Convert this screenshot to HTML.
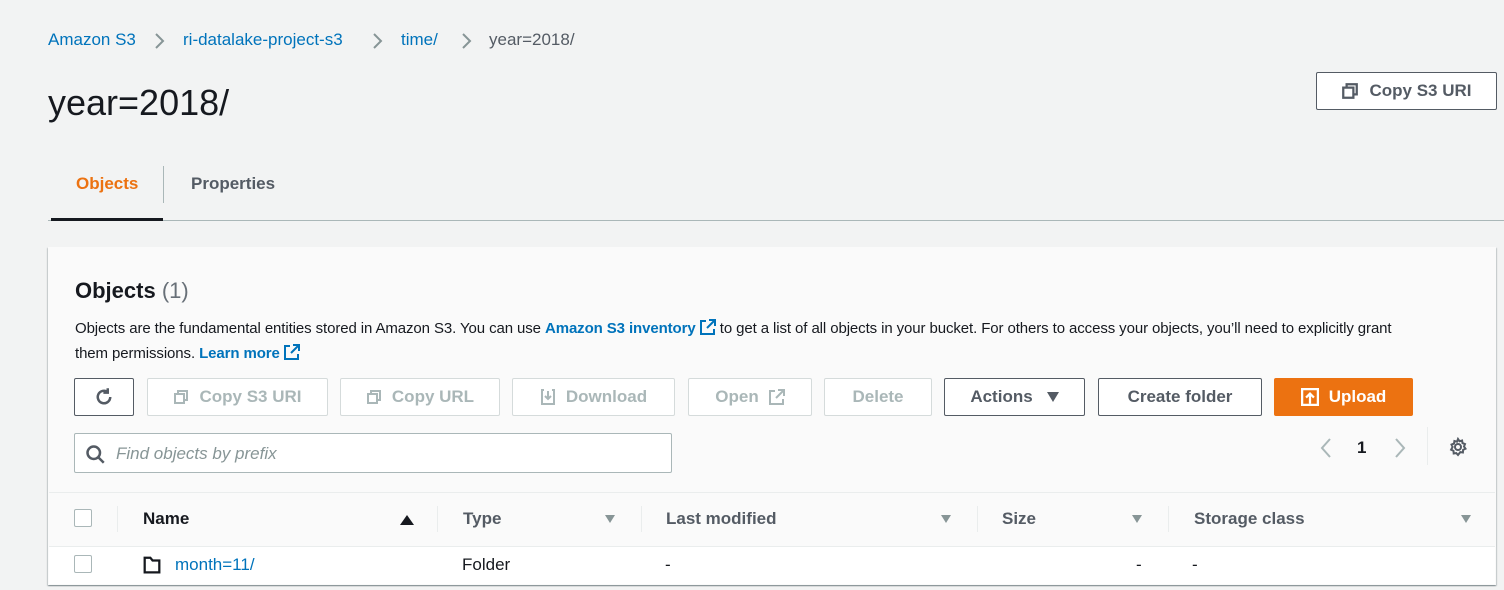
<!DOCTYPE html>
<html><head><meta charset="utf-8"><style>
*{box-sizing:border-box;margin:0;padding:0}
body{width:1504px;height:590px;background:#f2f3f3;font-family:"Liberation Sans",sans-serif;color:#16191f;position:relative;overflow:hidden}
.a{position:absolute;white-space:nowrap}
.bc{top:30px;font-size:17px;color:#0073bb}
.btn{position:absolute;height:38px;top:378px;border:1px solid #d5dbdb;border-radius:2px;background:#fff;color:#aab7b8;font-weight:bold;font-size:17px;display:flex;align-items:center;justify-content:center;gap:10px}
.dk{border-color:#545b64;color:#545b64}
.cb{position:absolute;width:18px;height:18px;border:1px solid #aab7b8;border-radius:2px;background:#fff}
.th{position:absolute;top:509px;font-size:17px;font-weight:bold;color:#545b64}
.sep{position:absolute;top:506px;width:1px;height:26px;background:#eaeded}
.tri{position:absolute;top:515px;width:0;height:0;border-left:5px solid transparent;border-right:5px solid transparent;border-top:8px solid #879596}
</style></head><body>
<div class="a bc" style="left:48px">Amazon S3</div>
<svg class="a" style="left:153px;top:32px" width="14" height="18" viewBox="0 0 14 18" fill="none" stroke="#879596" stroke-width="2"><path d="M3 2l7 7-7 7"/></svg>
<div class="a bc" style="left:183px">ri-datalake-project-s3</div>
<svg class="a" style="left:371px;top:32px" width="14" height="18" viewBox="0 0 14 18" fill="none" stroke="#879596" stroke-width="2"><path d="M3 2l7 7-7 7"/></svg>
<div class="a bc" style="left:401px">time/</div>
<svg class="a" style="left:460px;top:32px" width="14" height="18" viewBox="0 0 14 18" fill="none" stroke="#879596" stroke-width="2"><path d="M3 2l7 7-7 7"/></svg>
<div class="a" style="left:489px;top:30px;font-size:17px;color:#545b64">year=2018/</div>
<div class="a" style="left:48px;top:82px;font-size:36px">year=2018/</div>
<div class="btn dk" style="left:1316px;top:72px;width:181px;color:#545b64">
<svg width="18" height="18" viewBox="0 0 16 16" fill="none" stroke="#545b64" stroke-width="2"><rect x="2" y="5" width="9" height="9"/><path d="M5 5V2h9v9h-3"/></svg>Copy S3 URI</div>
<div class="a" style="left:76px;top:174px;font-size:17px;font-weight:bold;color:#ec7211">Objects</div>
<div class="a" style="left:163px;top:166px;width:1px;height:37px;background:#aab7b8"></div>
<div class="a" style="left:191px;top:174px;font-size:17px;font-weight:bold;color:#545b64">Properties</div>
<div class="a" style="left:48px;top:220px;width:1456px;height:1px;background:#aab7b8"></div>
<div class="a" style="left:51px;top:218px;width:112px;height:3px;background:#16191f"></div>

<div class="a" style="left:48px;top:247px;width:1448px;height:338px;background:#fafafa;box-shadow:0 1px 1px rgba(0,28,36,.3),1px 1px 1px rgba(0,28,36,.15),-1px 1px 1px rgba(0,28,36,.15)"></div>
<div class="a" style="left:75px;top:278px;font-size:22px;font-weight:bold">Objects <span style="font-weight:normal;color:#687078">(1)</span></div>
<div class="a" style="left:75px;top:316px;font-size:15px;line-height:25px;color:#16191f;letter-spacing:-0.1px">Objects are the fundamental entities stored in Amazon S3. You can use <b style="color:#0073bb">Amazon S3 inventory</b> <svg width="16" height="16" viewBox="0 0 16 16" fill="none" stroke="#0073bb" stroke-width="2" style="vertical-align:-2px"><path d="M9 1h6v6M15 1L7 9M6 2H1v13h13V10"/></svg> to get a list of all objects in your bucket. For others to access your objects, you’ll need to explicitly grant<br>them permissions. <b style="color:#0073bb">Learn more</b> <svg width="16" height="16" viewBox="0 0 16 16" fill="none" stroke="#0073bb" stroke-width="2" style="vertical-align:-2px"><path d="M9 1h6v6M15 1L7 9M6 2H1v13h13V10"/></svg></div>

<div class="btn dk" style="left:74px;width:60px"><svg width="20" height="20" viewBox="0 0 16 16" fill="none" stroke="#545b64" stroke-width="2"><path d="M13 8a5 5 0 1 1-2-4"/><path d="M11 1v3.5h-3.5"/></svg></div>
<div class="btn" style="left:147px;width:181px"><svg width="16" height="16" viewBox="0 0 16 16" fill="none" stroke="#aab7b8" stroke-width="2"><rect x="2" y="5" width="9" height="9"/><path d="M5 5V2h9v9h-3"/></svg>Copy S3 URI</div>
<div class="btn" style="left:340px;width:160px"><svg width="16" height="16" viewBox="0 0 16 16" fill="none" stroke="#aab7b8" stroke-width="2"><rect x="2" y="5" width="9" height="9"/><path d="M5 5V2h9v9h-3"/></svg>Copy URL</div>
<div class="btn" style="left:512px;width:163px"><svg width="16" height="16" viewBox="0 0 16 16" fill="none" stroke="#aab7b8" stroke-width="2"><path d="M4 1H2v14h12V1h-2M8 2v8M5 7l3 3 3-3"/></svg>Download</div>
<div class="btn" style="left:688px;width:124px">Open <svg width="16" height="16" viewBox="0 0 16 16" fill="none" stroke="#aab7b8" stroke-width="2"><path d="M9 1h6v6M15 1L7 9M6 2H1v13h13V10"/></svg></div>
<div class="btn" style="left:824px;width:108px">Delete</div>
<div class="btn dk" style="left:944px;width:141px">Actions <span style="display:inline-block;border-left:6px solid transparent;border-right:6px solid transparent;border-top:10px solid #545b64;margin-left:4px"></span></div>
<div class="btn dk" style="left:1098px;width:164px">Create folder</div>
<div class="btn" style="left:1274px;width:139px;background:#ec7211;border-color:#ec7211;color:#fff"><svg width="18" height="18" viewBox="0 0 16 16" fill="none" stroke="#fff" stroke-width="2"><rect x="1" y="1" width="14" height="14"/><path d="M8 14V5M4.5 8.5L8 5l3.5 3.5"/></svg>Upload</div>

<div class="a" style="left:74px;top:433px;width:598px;height:40px;border:1px solid #aab7b8;border-radius:2px;background:#fff"></div>
<svg class="a" style="left:85px;top:444px" width="20" height="20" viewBox="0 0 16 16" fill="none" stroke="#545b64" stroke-width="2"><circle cx="7" cy="7" r="5"/><path d="M10.5 10.5L15 15"/></svg>
<div class="a" style="left:116px;top:444px;font-size:17px;font-style:italic;color:#879596">Find objects by prefix</div>
<svg class="a" style="left:1318px;top:437px" width="16" height="22" viewBox="0 0 16 22" fill="none" stroke="#aab7b8" stroke-width="2"><path d="M12 2L4 11l8 9"/></svg>
<div class="a" style="left:1357px;top:438px;font-size:17px;font-weight:bold">1</div>
<svg class="a" style="left:1392px;top:437px" width="16" height="22" viewBox="0 0 16 22" fill="none" stroke="#aab7b8" stroke-width="2"><path d="M4 2l8 9-8 9"/></svg>
<div class="a" style="left:1427px;top:427px;width:1px;height:38px;background:#eaeded"></div>
<svg class="a" style="left:1448px;top:437px" width="20" height="20" viewBox="0 0 20 20" fill="none" stroke="#545b64" stroke-width="2"><circle cx="10" cy="10" r="3"/><path d="M10 2l1.5 2.2 2.6-.7.4 2.6 2.5 1-1 2.4 1.5 2.2-2.4 1.2-.2 2.6-2.6-.4L10 18l-1.7-1.9-2.6.4-.2-2.6-2.4-1.2L4.6 10 3.5 7.6 6 6.6l.4-2.6 2.6.7z"/></svg>

<div class="a" style="left:49px;top:492px;width:1446px;height:1px;background:#eaeded"></div>
<div class="cb" style="left:74px;top:509px"></div>
<div class="sep" style="left:117px"></div>
<div class="th" style="left:143px;color:#16191f">Name</div>
<div class="a" style="left:400px;top:515px;border-left:7px solid transparent;border-right:7px solid transparent;border-bottom:10px solid #16191f"></div>
<div class="sep" style="left:437px"></div>
<div class="th" style="left:463px">Type</div><div class="tri" style="left:605px"></div>
<div class="sep" style="left:641px"></div>
<div class="th" style="left:666px">Last modified</div><div class="tri" style="left:941px"></div>
<div class="sep" style="left:977px"></div>
<div class="th" style="left:1002px">Size</div><div class="tri" style="left:1132px"></div>
<div class="sep" style="left:1168px"></div>
<div class="th" style="left:1194px">Storage class</div><div class="tri" style="left:1461px"></div>
<div class="a" style="left:49px;top:546px;width:1446px;height:38px;background:#fff;border-top:1px solid #eaeded"></div>
<div class="cb" style="left:74px;top:555px"></div>
<svg class="a" style="left:143px;top:556px" width="18" height="18" viewBox="0 0 16 16" fill="none" stroke="#16191f" stroke-width="2"><path d="M1.5 1.5h5l2 2.5h6v10.5h-13z"/></svg>
<div class="a" style="left:175px;top:555px;font-size:17px;color:#0073bb">month=11/</div>
<div class="a" style="left:462px;top:555px;font-size:17px">Folder</div>
<div class="a" style="left:665px;top:555px;font-size:17px">-</div>
<div class="a" style="left:1136px;top:555px;font-size:17px">-</div>
<div class="a" style="left:1192px;top:555px;font-size:17px">-</div>
</body></html>
